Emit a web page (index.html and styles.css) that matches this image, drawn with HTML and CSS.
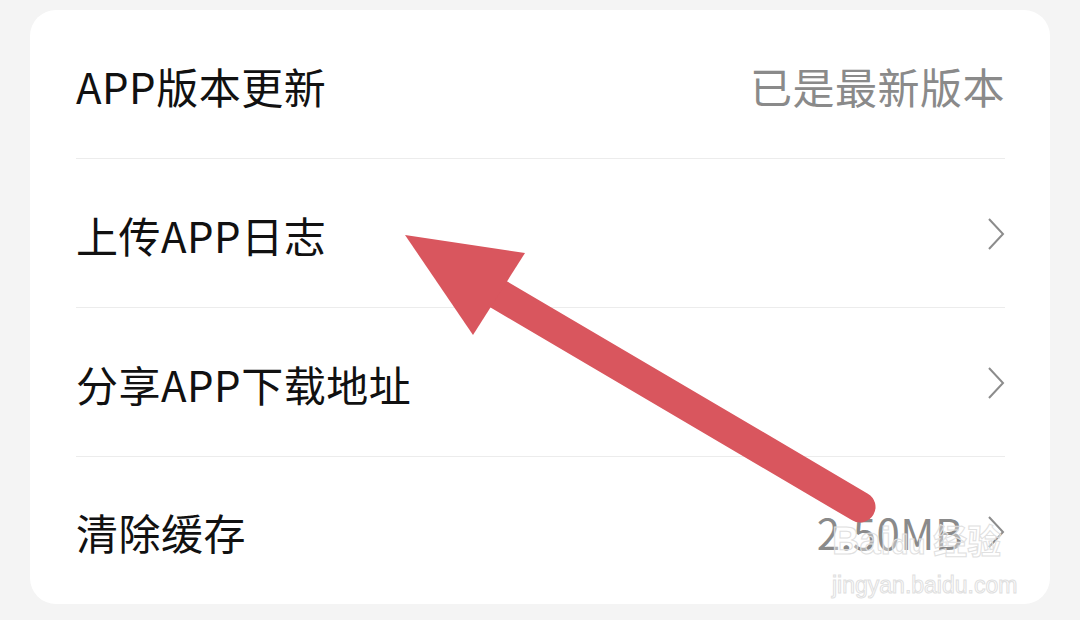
FILE: index.html
```html
<!DOCTYPE html>
<html lang="zh-CN">
<head>
<meta charset="utf-8">
<link rel="stylesheet" href="styles.css">
</head>
<body>
<div class="page">
  <div class="card">
    <div class="row">
      <span class="label">APP版本更新</span>
      <span class="value">已是最新版本</span>
    </div>
    <div class="row">
      <span class="label">上传APP日志</span>
      <svg class="chev" viewBox="0 0 18 34"><path d="M2 2 L16 17 L2 32" fill="none" stroke="#8c8c8c" stroke-width="2"/></svg>
    </div>
    <div class="row">
      <span class="label">分享APP下载地址</span>
      <svg class="chev" viewBox="0 0 18 34"><path d="M2 2 L16 17 L2 32" fill="none" stroke="#8c8c8c" stroke-width="2"/></svg>
    </div>
    <div class="row last">
      <span class="label">清除缓存</span>
      <span class="right">
        <span class="value">2.50MB</span>
        <svg class="chev" viewBox="0 0 18 34"><path d="M2 2 L16 17 L2 32" fill="none" stroke="#8c8c8c" stroke-width="2"/></svg>
      </span>
    </div>
  </div>
  <div class="watermark">
    <div class="wm-top"><span class="wm-bai">Bai</span><span class="wm-paw">du</span><span class="wm-jy">经验</span></div>
    <div class="wm-url">jingyan.baidu.com</div>
  </div>
  <svg class="arrow" viewBox="0 0 1080 620">
    <line x1="498" y1="294" x2="860" y2="507" stroke="#d9565e" stroke-width="31" stroke-linecap="round"/>
    <polygon points="405,235 525,253 473,335" fill="#d9565e"/>
  </svg>
</div>
</body>
</html>
```
FILE: styles.css
```css
html, body {
  margin: 0;
  padding: 0;
  background: #f4f4f4;
}
.page {
  position: relative;
  width: 1080px;
  height: 620px;
  padding: 10px 30px 0;
  box-sizing: border-box;
  font-family: "Noto Sans CJK SC", "Noto Sans", sans-serif;
}
.card {
  background: #ffffff;
  border-radius: 26px;
  padding: 0 45px 0 46px;
  height: 594px;
  display: flex;
  flex-direction: column;
}
.row {
  height: 149px;
  flex: none;
  border-bottom: 1px solid #ececec;
  display: flex;
  align-items: center;
  justify-content: space-between;
  padding-top: 2px;
  box-sizing: border-box;
}
.row.last {
  border-bottom: none;
  flex: 1;
}
.label {
  font-size: 42px;
  color: #111111;
  letter-spacing: 0.5px;
}
.value {
  font-size: 42px;
  color: #8a8a8a;
  letter-spacing: 0.5px;
}
.right {
  display: flex;
  align-items: center;
  gap: 24px;
}
.chev {
  width: 18px;
  height: 34px;
  display: block;
}
.watermark {
  position: absolute;
  left: 832px;
  top: 520px;
  color: rgba(255, 255, 255, 0.35);
  -webkit-text-stroke: 1px #e0e0e0;
  font-family: "Liberation Sans", sans-serif;
}
.wm-top {
  display: flex;
  align-items: baseline;
  font-size: 38px;
  line-height: 40px;
  font-weight: bold;
}
.wm-jy {
  font-family: "Noto Sans CJK SC", sans-serif;
  font-size: 34px;
  margin-left: 8px;
}
.wm-paw {
  font-size: 28px;
}
.wm-url {
  font-size: 23px;
  line-height: 28px;
  margin-top: 6px;
}
.arrow {
  position: absolute;
  left: 0;
  top: 0;
  width: 1080px;
  height: 620px;
  pointer-events: none;
}
```
